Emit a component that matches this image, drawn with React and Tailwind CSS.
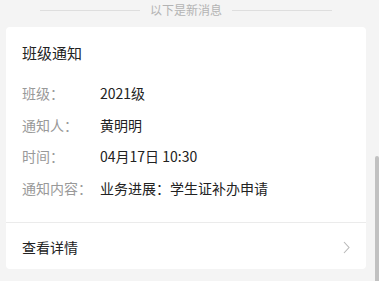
export default function App() {
  const rows = [
    ["班级：", "2021级"],
    ["通知人：", "黄明明"],
    ["时间：", "04月17日 10:30"],
    ["通知内容：", "业务进展：学生证补办申请"],
  ];

  return (
    <div
      className="flex h-[281px] w-[379px] overflow-hidden bg-[#f4f4f4]"
      style={{ fontFamily: '"Noto Sans CJK SC", "Liberation Sans", sans-serif' }}
    >
      <main className="w-[372px] shrink-0">
        <div className="flex h-[20px] items-center justify-center gap-[10px]">
          <span className="h-px w-[100px] bg-[#dedede]" />
          <span className="text-[12px] leading-[20px] text-[#b3b3b3]">以下是新消息</span>
          <span className="h-px w-[100px] bg-[#dedede]" />
        </div>

        <section className="mx-[6px] mt-[7px] rounded-[4px] bg-white">
          <div className="px-[16px] pt-[15px] pb-[24px]">
            <h2 className="text-[15px] leading-[22px] text-[#222]">班级通知</h2>
            <ul className="mt-[19px] flex flex-col gap-[11.5px]">
              {rows.map(([label, value]) => (
                <li key={label} className="flex text-[14px] leading-[20px]">
                  <span className="w-[78px] shrink-0 text-[#999]">{label}</span>
                  <span className="text-[#222]">{value}</span>
                </li>
              ))}
            </ul>
          </div>
          <div className="h-px bg-[#ebebeb]" />
          <div className="flex h-[46px] items-center justify-between px-[16px] pt-[4px]">
            <span className="text-[14px] text-[#222]">查看详情</span>
            <svg width="7" height="13" viewBox="0 0 7 13" fill="none">
              <path d="M1 1l5 5.5L1 12" stroke="#b8b8b8" strokeWidth="1.1" />
            </svg>
          </div>
        </section>
      </main>

      <aside className="flex w-[7px] flex-col">
        <div className="h-[156px]" />
        <div className="ml-[3px] flex-1 rounded-t-[2px] bg-[#c1c1c1]" />
      </aside>
    </div>
  );
}
